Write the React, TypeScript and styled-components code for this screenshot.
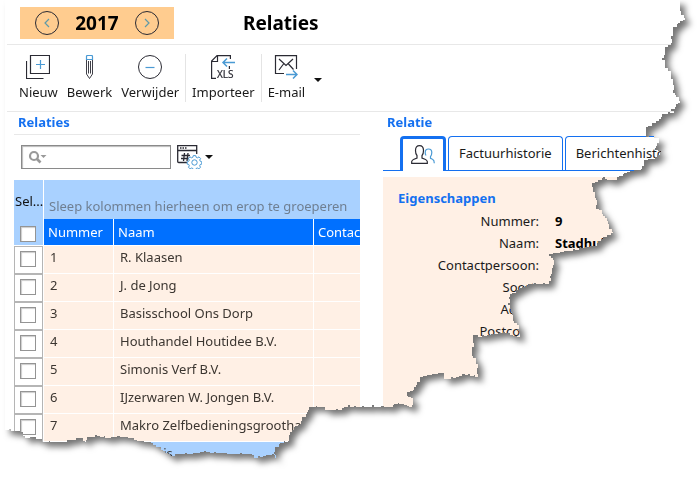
import React from "react";
import styled, { createGlobalStyle } from "styled-components";

const BLUE = "#1470f0";
const PEACH = "#fff0e5";

const Global = createGlobalStyle`
  *, *::before, *::after { box-sizing: border-box; }
  body {
    margin: 0;
    background: #fff;
    color: #1a1a1a;
    font: 13px/18px "Noto Sans", "Open Sans", sans-serif;
    overflow: hidden;
  }
  button, input { font: inherit; color: inherit; }
`;

/* Corner points of the torn edge, from the top right to the bottom left. */
const TEAR: [number, number][] = [
  [680, 0], [680, 8], [681, 13], [685, 18], [680, 21], [678, 23], [673, 27], [673, 33], [671, 36], [671, 43],
  [665, 47], [664, 55], [662, 58], [665, 60], [665, 65], [668, 68], [671, 71], [671, 78], [674, 85], [673, 90],
  [676, 95], [680, 101], [676, 104], [676, 107], [671, 109], [674, 111], [670, 113], [662, 114], [659, 119],
  [653, 123], [646, 127], [646, 136], [659, 138], [657, 143], [655, 148], [661, 151], [657, 155], [652, 159],
  [644, 160], [641, 169], [627, 172], [619, 176], [613, 180], [607, 180], [603, 177], [598, 180], [592, 183],
  [593, 190], [597, 200], [596, 208], [602, 210], [603, 214], [607, 218], [609, 228], [613, 232], [603, 237],
  [598, 241], [593, 246], [585, 247], [575, 250], [560, 252], [549, 254], [553, 258], [552, 271], [548, 284],
  [530, 284], [522, 287], [510, 294], [508, 303], [512, 312], [514, 321], [517, 323], [520, 337], [513, 336],
  [505, 333], [498, 333], [487, 335], [478, 337], [473, 335], [472, 353], [476, 362], [477, 368], [478, 377],
  [470, 376], [462, 374], [456, 377], [444, 379], [441, 373], [432, 374], [420, 377], [417, 382], [413, 390],
  [407, 392], [408, 396], [413, 398], [413, 404], [409, 407], [402, 404], [394, 404], [390, 407], [374, 407],
  [372, 405], [370, 407], [350, 407], [349, 405], [342, 408], [341, 410], [325, 410], [323, 407], [309, 407],
  [307, 412], [302, 417], [300, 424], [295, 426], [290, 432], [288, 441], [280, 443], [275, 447], [274, 452],
  [276, 458], [272, 454], [263, 456], [254, 458], [248, 454], [230, 454], [216, 453], [200, 452], [190, 454],
  [177, 454], [170, 456], [163, 451], [153, 445], [147, 442], [137, 441], [128, 438], [117, 436], [108, 438],
  [97, 436], [87, 437], [85, 442], [78, 438], [63, 442], [53, 442], [42, 442], [33, 437], [25, 438],
  [20, 432], [5, 430],
];

/* Breaks the outline into small pixel steps so that the paper looks ragged. */
const raggedOutline = () => {
  const out: string[] = ["5px 0px"];
  let [px, py] = TEAR[0];
  out.push(`${px}px ${py}px`);
  TEAR.slice(1).forEach(([x, y], i) => {
    const n = Math.max(1, Math.round(Math.hypot(x - px, y - py) / 3));
    const sx = px;
    const sy = py;
    for (let k = 1; k <= n; k++) {
      const jitter = k < n && (i + k) % 3 === 0 ? 1 : 0;
      const nx = Math.round(sx + ((x - sx) * k) / n) + jitter;
      const ny = Math.round(sy + ((y - sy) * k) / n) - jitter;
      out.push(`${px}px ${ny}px`, `${nx}px ${ny}px`);
      px = nx;
      py = ny;
    }
  });
  return out.join(", ");
};

const Shadow = styled.div`
  filter: drop-shadow(5px 5px 3px rgba(0, 0, 0, 0.54));
`;

const Sheet = styled.main`
  background: #fff;
  clip-path: polygon(${raggedOutline()});
  padding-left: 7px;
`;

const Header = styled.header`
  display: flex;
  align-items: center;
  gap: 69px;
  padding: 7px 0 5px 13px;
  border-bottom: 1px solid #e8e8e8;
`;

const YearBox = styled.div`
  display: flex;
  align-items: center;
  justify-content: space-between;
  width: 154px;
  height: 32px;
  padding: 0 15px;
  background: #ffcc8f;
  color: #000;
  font-size: 19px;
  font-weight: 700;
`;

const Plain = styled.button`
  border: 0;
  padding: 0;
  background: none;
  display: flex;
  align-items: center;
`;

const Title = styled.h1`
  margin: 0;
  font-size: 19px;
  line-height: 32px;
  font-weight: 700;
  color: #000;
`;

const Toolbar = styled.div`
  display: flex;
  align-items: flex-start;
  gap: 9px;
  padding: 9px 0 9px 12px;
  border-bottom: 1px solid #e8e8e8;
`;

const Tool = styled(Plain)`
  flex-direction: column;
  gap: 4px;
  padding-top: 1px;
`;

const Rule = styled.span`
  width: 1px;
  height: 48px;
  margin: 0 -3px;
  background: #e4e4e4;
`;

const Caret = styled.span`
  width: 0;
  height: 0;
  border: 4px solid transparent;
  border-top-color: #111;
  border-bottom: 0;
`;

const MenuButton = styled(Plain)`
  height: 48px;
  padding-top: 3px;
`;

const Columns = styled.div`
  display: grid;
  grid-template-columns: minmax(0, 23fr) minmax(0, 21fr);
  gap: 23px;
  padding-left: 7px;
  height: 366px;
`;

const Panel = styled.section`
  overflow: hidden;
  display: flex;
  flex-direction: column;
`;

const PanelTitle = styled.h2<{ $line?: boolean }>`
  margin: 0;
  padding: 1px 4px 3px;
  font-size: 13px;
  line-height: 18px;
  color: ${BLUE};
  border-bottom: ${(p) => (p.$line ? 1 : 0)}px solid #e8e8e8;
`;

const SearchRow = styled.div`
  display: flex;
  align-items: center;
  gap: 6px;
  padding: 10px 7px 11px;
`;

const SearchBox = styled.label`
  display: flex;
  align-items: center;
  width: 150px;
  height: 24px;
  padding-left: 6px;
  border: 1px solid #8a8a8a;
  box-shadow: inset 1px 1px 1px #bbb;
`;

const SearchInput = styled.input`
  flex: 1;
  min-width: 0;
  border: 0;
  outline: 0;
  background: none;
`;

const ViewButton = styled(Plain)`
  gap: 3px;
`;

const Table = styled.table`
  width: 440px;
  table-layout: fixed;
  border-collapse: separate;
  border-spacing: 0;
`;

const SelHead = styled.th`
  padding: 12px 0 0 1px;
  background: #a9d1ff;
  border-right: 1px solid #fff;
  border-bottom: 1px solid #fff;
  font-weight: 400;
  text-align: left;
  vertical-align: top;
  color: #111;
`;

const GroupCell = styled.td`
  height: 39px;
  padding: 14px 5px 0;
  background: #a9d1ff;
  color: #6f7f92;
  vertical-align: top;
  line-height: 25px;
`;

const HeadCell = styled.th`
  height: 27px;
  padding: 0 4px;
  background: #0070ff;
  color: #fff;
  font-weight: 400;
  text-align: left;
  border-right: 1px solid #fff;
  border-bottom: 1px solid #fff;
`;

const Cell = styled.td<{ $selected?: boolean }>`
  height: 28px;
  padding: 0 6px 5px;
  background: ${(p) => (p.$selected ? "#a9d1ff" : PEACH)};
  color: #3c3631;
  border-right: 1px solid #fff;
  border-bottom: 1px solid #fff;
  white-space: nowrap;
`;

const CheckCell = styled.td`
  height: 28px;
  padding: 0;
  border-right: 1px solid #fff;
`;

const CheckFrame = styled.label`
  display: flex;
  align-items: center;
  height: 28px;
  padding: 0 0 2px 5px;
  border: 1px solid #b5b5b5;
`;

const Check = styled.input`
  appearance: none;
  display: block;
  width: 16px;
  height: 16px;
  margin: 0;
  background: #fff;
  border: 1px solid #949494;
  box-shadow: inset 1px 1px 1px #ccc;
`;

const HeadCheck = styled(Check)`
  margin: 16px 0 0 5px;
`;

const Tabs = styled.div`
  display: flex;
  gap: 2px;
  margin-top: 2px;
  padding-left: 17px;
  border-bottom: 1px solid ${BLUE};
`;

const Tab = styled.button<{ $active?: boolean }>`
  display: flex;
  align-items: center;
  justify-content: center;
  flex: none;
  height: ${(p) => (p.$active ? 35 : 34)}px;
  margin-bottom: ${(p) => (p.$active ? -1 : 0)}px;
  padding: 0 ${(p) => (p.$active ? 8 : 10)}px 1px;
  background: #fff;
  border: ${(p) => (p.$active ? 3 : 1)}px solid ${BLUE};
  border-bottom: 0;
  border-radius: 4px 4px 0 0;
  white-space: nowrap;
`;

const Properties = styled.div`
  flex: 1;
  margin-top: 6px;
  padding: 12px 15px;
  background: ${PEACH};
`;

const SectionTitle = styled.h3`
  margin: 0 0 3px;
  font-size: 13px;
  line-height: 18px;
  color: ${BLUE};
`;

const Fields = styled.dl`
  display: grid;
  grid-template-columns: 141px 1fr;
  column-gap: 16px;
  margin: 0;
  line-height: 22px;
  dt { text-align: right; }
  dd { margin: 0; color: #000; font-weight: 700; }
`;

const INK = "#2a2a33";
const SKY = "#4a9ad4";

const Chevron = ({ left }: { left?: boolean }) => (
  <svg width="24" height="24" viewBox="0 0 24 24" fill="none">
    <circle cx="12" cy="12" r="11.5" stroke={INK} />
    <path d={left ? "M14 8l-4 4 4 4" : "M10 8l4 4-4 4"} stroke="#5f9aa8" strokeWidth="1.2" />
  </svg>
);

const NewIcon = () => (
  <svg width="24" height="24" viewBox="0 0 24 24" fill="none" stroke={INK} strokeWidth="1.2">
    <path d="M4.5.5h19v18h-19zM.5 6v17.500h17" />
    <path d="M14.500 5v9M10 9.500h9" stroke={SKY} strokeWidth="1.2" />
  </svg>
);

const PencilIcon = () => (
  <svg width="24" height="24" viewBox="0 0 24 24" fill="none" stroke={INK}>
    <path d="M8.500 5v14l3 4.500 3-4.500V5M10.500 6v12.500M12.500 6v12.500" strokeWidth="0.900" />
    <path d="M8.500 4.500V1.500q0-1 1-1h4q1 0 1 1v3z" stroke={SKY} strokeWidth="1.2" />
  </svg>
);

const RemoveIcon = () => (
  <svg width="24" height="24" viewBox="0 0 24 24" fill="none">
    <circle cx="12" cy="12" r="11.5" stroke={INK} />
    <path d="M7.500 12.500h9" stroke={SKY} strokeWidth="1.2" />
  </svg>
);

const ImportIcon = () => (
  <svg width="24" height="24" viewBox="0 0 24 24" overflow="visible" fill="none" stroke={INK} strokeWidth="1.2">
    <path d="M5 23.400H.6V6L6 .6h13.400V4M6.500 1v5.500H1M18.400 11v3" />
    <path d="M24 7.500H12M16 3.500l-4 4 4 4" stroke={SKY} strokeWidth="1.5" />
    <text x="6" y="23" fontSize="10" fill={INK} stroke={INK} strokeWidth="0.200">XLS</text>
  </svg>
);

const MailIcon = () => (
  <svg width="24" height="24" viewBox="0 0 24 24" fill="none" stroke={INK} strokeWidth="1.2">
    <path d="M10 18.500H1.500V.6h21V14M5 4l7 6.500L19 4M5 15l4.500-6M19.500 14.500L14.500 9" />
    <path d="M12 19.500h11M19 15.500l4 4-4 4" stroke={SKY} strokeWidth="1.5" />
  </svg>
);

const SearchIcon = () => (
  <svg width="19" height="14" viewBox="0 0 19 14" fill="none" stroke="#999">
    <circle cx="6" cy="6" r="4" strokeWidth="2.200" />
    <path d="M8.500 8.500l4 4" strokeWidth="2.600" />
    <path d="M12.500 5h6l-3 3z" fill="#999" stroke="none" />
  </svg>
);

const ViewIcon = () => (
  <svg width="25" height="24" viewBox="0 0 25 24" fill="none" stroke={INK} strokeWidth="1.3">
    <path d="M10 17.500H1.700q-1 0-1-1V.7h19V9M1 5.500h18.500" />
    <path d="M3 3h1.500M5.500 3h1.500M8 3h1.500" />
    <path d="M7.500 8l-1 8M11 8l-1 8M4.500 10.500h8.500M4 13.500h8" />
    <path
      d="M16.300 10.600h2.400l.4 1.600 1.400.6 1.500-.9 1.600 1.600-.9 1.500.6 1.300 1.500.5v2.300l-1.600.4-.5 1.300.8 1.400-1.600 1.700-1.500-.9-1.300.5-.5 1.500h-2.200l-.5-1.500-1.300-.5-1.500.9-1.600-1.700.8-1.400-.5-1.300-1.600-.4v-2.300l1.500-.5.6-1.300-.9-1.500 1.600-1.600 1.500.9 1.400-.6z"
      fill="#fff"
      stroke={SKY}
      strokeWidth="1"
    />
    <circle cx="17.500" cy="17.500" r="2.700" stroke={SKY} strokeWidth="1" />
  </svg>
);

const PeopleIcon = () => (
  <svg width="24" height="19" viewBox="0 0 24 19" fill="none" strokeWidth="1.2">
    <path
      d="M.7 18.300v-1.800q.3-1.500 2.300-2.300l3-1.200v-2.500Q4.500 9 4.500 5.500 4.500.6 8.500.6t4 4.900q0 3.500-1.500 5V13l3 1.200q2 .8 2.300 2.300v1.800z"
      stroke={INK}
    />
    <path
      d="M15 10.500q-.8-1.300-.8-3 0-3.500 3.300-3.500t3.300 3.500q0 2.500-1.300 4v1.800l2 1q1.800.8 1.800 4"
      stroke={SKY}
    />
  </svg>
);

const rows = [
  "R. Klaasen",
  "J. de Jong",
  "Basisschool Ons Dorp",
  "Houthandel Houtidee B.V.",
  "Simonis Verf B.V.",
  "IJzerwaren W. Jongen B.V.",
  "Makro Zelfbedieningsgroothandel",
  "Stadhuis",
];

const fields: [string, string][] = [
  ["Nummer:", "9"],
  ["Naam:", "Stadhuis"],
  ["Contactpersoon:", ""],
  ["Soort:", ""],
  ["Adres:", ""],
  ["Postcode:", ""],
];

export default function App() {
  return (
    <>
      <Global />
      <Shadow>
        <Sheet>
          <Header>
            <YearBox>
              <Plain aria-label="Vorig jaar"><Chevron left /></Plain>
              2017
              <Plain aria-label="Volgend jaar"><Chevron /></Plain>
            </YearBox>
            <Title>Relaties</Title>
          </Header>
          <Toolbar>
            <Tool><NewIcon />Nieuw</Tool>
            <Tool><PencilIcon />Bewerk</Tool>
            <Tool><RemoveIcon />Verwijder</Tool>
            <Rule />
            <Tool><ImportIcon />Importeer</Tool>
            <Rule />
            <Tool><MailIcon />E-mail</Tool>
            <MenuButton aria-label="Meer e-mailopties"><Caret /></MenuButton>
          </Toolbar>
          <Columns>
            <Panel>
              <PanelTitle $line>Relaties</PanelTitle>
              <SearchRow>
                <SearchBox>
                  <SearchIcon />
                  <SearchInput type="text" aria-label="Zoeken" />
                </SearchBox>
                <ViewButton aria-label="Weergave"><ViewIcon /><Caret /></ViewButton>
              </SearchRow>
              <Table>
                <colgroup>
                  <col width="30" />
                  <col width="70" />
                  <col width="200" />
                  <col width="140" />
                </colgroup>
                <thead>
                  <tr>
                    <SelHead rowSpan={2}>
                      Sel...
                      <HeadCheck type="checkbox" aria-label="Alles selecteren" />
                    </SelHead>
                    <GroupCell colSpan={3}>Sleep kolommen hierheen om erop te groeperen</GroupCell>
                  </tr>
                  <tr>
                    <HeadCell>Nummer</HeadCell>
                    <HeadCell>Naam</HeadCell>
                    <HeadCell>Contactpersoon</HeadCell>
                  </tr>
                </thead>
                <tbody>
                  {rows.map((name, i) => (
                    <tr key={name}>
                      <CheckCell>
                        <CheckFrame><Check type="checkbox" aria-label={name} /></CheckFrame>
                      </CheckCell>
                      <Cell $selected={i === 7}>{i + 1}</Cell>
                      <Cell $selected={i === 7}>{name}</Cell>
                      <Cell $selected={i === 7} />
                    </tr>
                  ))}
                </tbody>
              </Table>
            </Panel>
            <Panel>
              <PanelTitle>Relatie</PanelTitle>
              <Tabs role="tablist">
                <Tab role="tab" $active aria-selected aria-label="Relatie"><PeopleIcon /></Tab>
                <Tab role="tab">Factuurhistorie</Tab>
                <Tab role="tab">Berichtenhistorie</Tab>
              </Tabs>
              <Properties>
                <SectionTitle>Eigenschappen</SectionTitle>
                <Fields>
                  {fields.map(([label, value]) => (
                    <React.Fragment key={label}>
                      <dt>{label}</dt>
                      <dd>{value}</dd>
                    </React.Fragment>
                  ))}
                </Fields>
              </Properties>
            </Panel>
          </Columns>
        </Sheet>
      </Shadow>
    </>
  );
}
